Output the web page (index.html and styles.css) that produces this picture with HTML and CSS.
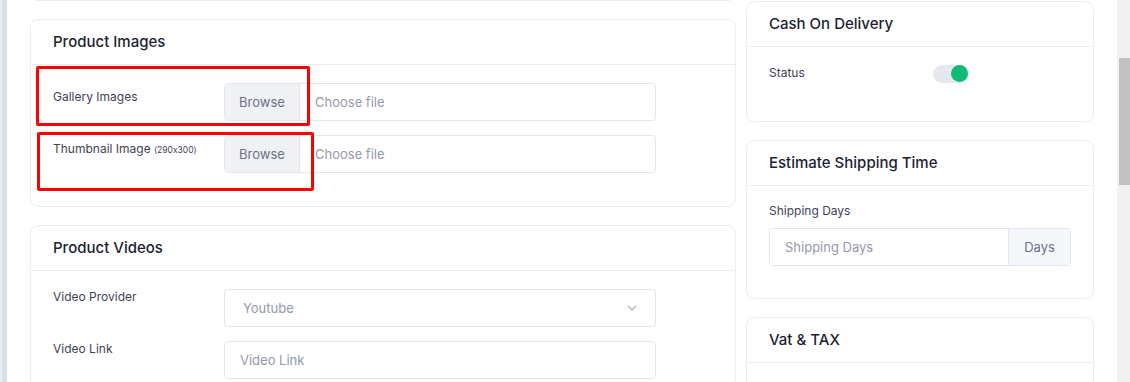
FILE: index.html
```html
<!DOCTYPE html>
<html lang="en">
<head>
    <meta charset="UTF-8">
    <meta name="viewport" content="width=device-width, initial-scale=1.0">
    <title>Edit Product</title>
    <link rel="stylesheet" href="styles.css">
</head>
<body>
    <div class="page">
        <div class="rail"></div>

        <div class="content">
            <div class="col-main">
                <div class="card card-stub"></div>

                <section class="card">
                    <div class="card-head"><h3>Product Images</h3></div>
                    <div class="card-body images-body">
                        <div class="form-row">
                            <label class="form-label">Gallery Images</label>
                            <div class="file-group">
                                <span class="file-btn">Browse</span>
                                <span class="file-text">Choose file</span>
                            </div>
                        </div>
                        <div class="form-row">
                            <label class="form-label">Thumbnail Image <small>(290x300)</small></label>
                            <div class="file-group">
                                <span class="file-btn">Browse</span>
                                <span class="file-text">Choose file</span>
                            </div>
                        </div>
                    </div>
                </section>

                <section class="card">
                    <div class="card-head"><h3>Product Videos</h3></div>
                    <div class="card-body">
                        <div class="form-row">
                            <label class="form-label">Video Provider</label>
                            <div class="select">
                                <span>Youtube</span>
                                <svg class="chevron" width="10" height="6" viewBox="0 0 10 6">
                                    <path d="M1 1 L5 5 L9 1" fill="none" stroke="#a5acc0" stroke-width="1.1"/>
                                </svg>
                            </div>
                        </div>
                        <div class="form-row">
                            <label class="form-label">Video Link</label>
                            <input class="text-input" type="text" placeholder="Video Link">
                        </div>
                    </div>
                </section>
            </div>

            <div class="col-side">
                <section class="card">
                    <div class="card-head"><h3>Cash On Delivery</h3></div>
                    <div class="card-body">
                        <div class="status-row">
                            <label class="form-label">Status</label>
                            <span class="toggle"><span class="knob"></span></span>
                        </div>
                    </div>
                </section>

                <section class="card">
                    <div class="card-head"><h3>Estimate Shipping Time</h3></div>
                    <div class="card-body">
                        <div class="stack-row">
                            <label class="form-label">Shipping Days</label>
                            <div class="addon-group">
                                <input class="addon-input" type="text" placeholder="Shipping Days">
                                <span class="addon">Days</span>
                            </div>
                        </div>
                    </div>
                </section>

                <section class="card">
                    <div class="card-head"><h3>Vat &amp; TAX</h3></div>
                    <div class="card-body"></div>
                </section>
            </div>
        </div>

        <div class="scrollbar"><div class="thumb"></div></div>

        <!-- annotation boxes drawn over the form -->
        <div class="mark mark-one"></div>
        <div class="mark mark-two"></div>
    </div>
</body>
</html>
```

FILE: styles.css
```css
* {
    box-sizing: border-box;
}
body {
    margin: 0;
    font-family: 'Inter', 'Open Sans', sans-serif;
    font-feature-settings: "calt" 0;
    background-color: #fff;
    color: #3f4254;
    overflow: hidden;
}
.page {
    position: relative;
    display: flex;
    height: 382px;
}
.rail {
    width: 7px;
    flex-shrink: 0;
    background-color: #d9e0e9;
    border-left: 2px solid #e9edf2;
}
.content {
    flex: 1;
    display: flex;
    gap: 10px;
    padding: 1px 23px 0 23px;
    overflow: hidden;
}
.col-main {
    width: 706px;
    flex-shrink: 0;
}
.col-side {
    width: 348px;
    flex-shrink: 0;
}
.card {
    background-color: #fff;
    border: 1px solid #ebedf3;
    border-radius: 8px;
    margin-bottom: 18px;
}
.card-stub {
    height: 30px;
    margin-top: -30px;
}
.card-head {
    height: 45px;
    display: flex;
    align-items: center;
    padding: 0 22px 2px;
    border-bottom: 1px solid #ebedf3;
}
.card-head h3 {
    margin: 0;
    font-size: 15px;
    font-weight: 500;
    color: #1c1f33;
}
.card-body {
    padding: 18px 22px 19px;
}
.form-row {
    display: grid;
    grid-template-columns: 171px 432px;
    margin-bottom: 14px;
}
.form-label {
    display: block;
    font-size: 12px;
    line-height: 14px;
    padding-top: 1px;
    color: #3f4254;
}
.images-body .form-label {
    padding-top: 7px;
}
.form-label small {
    font-size: 8.5px;
}
.file-group {
    display: flex;
    height: 38px;
    border: 1px solid #e4e6ef;
    border-radius: 4px;
    overflow: hidden;
    font-size: 13px;
}
.file-btn {
    width: 75px;
    display: flex;
    align-items: center;
    justify-content: center;
    background-color: #eff1f4;
    border-right: 1px solid #e4e6ef;
    color: #6c7189;
}
.file-text {
    display: flex;
    align-items: center;
    padding-left: 15px;
    color: #9499ad;
}
.select {
    height: 38px;
    display: flex;
    align-items: center;
    justify-content: space-between;
    padding: 0 18px;
    border: 1px solid #e4e6ef;
    border-radius: 4px;
    font-size: 13px;
    color: #9499ad;
}
.text-input {
    height: 38px;
    width: 100%;
    padding: 0 15px;
    border: 1px solid #e4e6ef;
    border-radius: 4px;
    font-family: inherit;
    font-size: 13px;
    outline: none;
}
.text-input::placeholder,
.addon-input::placeholder {
    color: #9499ad;
}
.status-row {
    display: grid;
    grid-template-columns: 164px auto;
    height: 23px;
    margin-bottom: 14px;
}
.status-row .form-label {
    padding-top: 1px;
}
.toggle {
    position: relative;
    display: block;
    width: 36px;
    height: 18px;
    border-radius: 9px;
    background-color: #e6e8ef;
}
.toggle .knob {
    position: absolute;
    top: 0;
    right: 1px;
    width: 17px;
    height: 17px;
    border-radius: 50%;
    background-color: #12bb74;
}
.stack-row {
    margin-bottom: 13px;
}
.stack-row .form-label {
    padding-top: 0;
    margin-bottom: 10px;
}
.addon-group {
    display: flex;
    height: 38px;
    border: 1px solid #e4e6ef;
    border-radius: 4px;
    overflow: hidden;
}
.addon-input {
    flex: 1;
    min-width: 0;
    border: none;
    padding: 0 15px;
    font-family: inherit;
    font-size: 13px;
    outline: none;
}
.addon {
    width: 62px;
    display: flex;
    align-items: center;
    justify-content: center;
    background-color: #f5f7fa;
    border-left: 1px solid #e4e6ef;
    font-size: 13px;
    color: #6c7189;
}
.scrollbar {
    width: 13px;
    flex-shrink: 0;
    background-color: #f1f1f1;
    padding: 58px 0 0 2px;
}
.thumb {
    height: 127px;
    background-color: #c1c1c1;
}
.mark {
    position: absolute;
    border: 3px solid #ff0000;
    border-radius: 2px;
}
.mark-one {
    left: 36px;
    top: 66px;
    width: 274px;
    height: 60px;
}
.mark-two {
    left: 37px;
    top: 132px;
    width: 277px;
    height: 59px;
}
```
